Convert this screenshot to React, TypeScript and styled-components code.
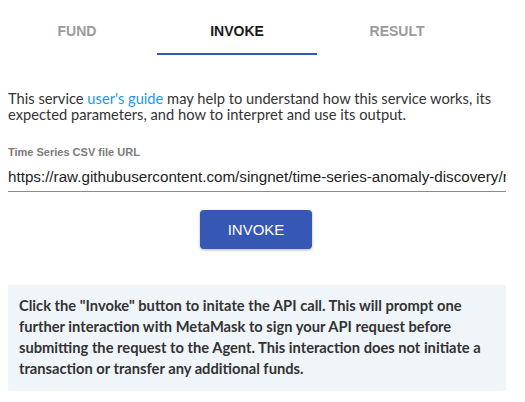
import React from "react";
import styled, { createGlobalStyle } from "styled-components";

const Global = createGlobalStyle`
  body { margin: 8px; background: #fff; font-family: "Lato", "Noto Sans", sans-serif; }
  * { box-sizing: border-box; }
`;

const Wrapper = styled.div`
  width: 498px;
  display: flex;
  flex-direction: column;
`;

const TabBar = styled.div`
  display: flex;
  margin-left: -11px;
  height: 47px;
`;

const Tab = styled.div<{ $active?: boolean }>`
  width: 160px;
  display: flex;
  align-items: center;
  justify-content: center;
  font-family: "Liberation Sans", Arial, sans-serif;
  font-weight: bold;
  font-size: 14px;
  color: ${(p) => (p.$active ? "#1a1a1a" : "#9b9b9b")};
  border-bottom: 2px solid ${(p) => (p.$active ? "#3657b3" : "transparent")};
`;

const Intro = styled.p`
  margin: 35px 0 0 0;
  font-size: 14.7px;
  line-height: 16px;
  color: #333;
`;

const Link = styled.a`
  color: #2196f3;
  text-decoration: none;
`;

const Field = styled.div`
  margin-top: 24px;
  display: flex;
  flex-direction: column;
`;

const Label = styled.label`
  font-family: "Liberation Sans", Arial, sans-serif;
  font-weight: bold;
  font-size: 11px;
  color: #7b7b7b;
  line-height: 13px;
`;

const Input = styled.div`
  margin-top: 8px;
  font-family: "Liberation Sans", Arial, sans-serif;
  font-size: 15.2px;
  color: #222;
  white-space: nowrap;
  overflow: hidden;
  padding-bottom: 5px;
  border-bottom: 1px solid #8a8a8a;
  line-height: 19px;
`;

const ButtonRow = styled.div`
  display: flex;
  justify-content: center;
  margin-top: 18px;
  padding-right: 2px;
`;

const Button = styled.button`
  width: 112px;
  height: 39px;
  background: #3657b3;
  color: #fff;
  border: none;
  border-radius: 4px;
  font-family: "Liberation Sans", Arial, sans-serif;
  font-size: 15px;
  box-shadow: 0 1px 3px rgba(0, 0, 0, 0.3);
`;

const InfoBox = styled.div`
  margin-top: 36px;
  background: #f0f5fa;
  padding: 10px 11px 12px 11px;
  font-size: 14.7px;
  font-weight: bold;
  line-height: 21px;
  color: #333;
`;

export default function App() {
  return (
    <>
      <Global />
      <Wrapper>
        <TabBar>
          <Tab>FUND</Tab>
          <Tab $active>INVOKE</Tab>
          <Tab>RESULT</Tab>
        </TabBar>
        <Intro>
          This service <Link href="#">user's guide</Link> may help to understand how this service works, its
          expected parameters, and how to interpret and use its output.
        </Intro>
        <Field>
          <Label>Time Series CSV file URL</Label>
          <Input>https://raw.githubusercontent.com/singnet/time-series-anomaly-discovery/master/</Input>
        </Field>
        <ButtonRow>
          <Button>INVOKE</Button>
        </ButtonRow>
        <InfoBox>
          Click the "Invoke" button to initate the API call. This will prompt one further interaction with
          MetaMask to sign your API request before submitting the request to the Agent. This interaction does
          not initiate a transaction or transfer any additional funds.
        </InfoBox>
      </Wrapper>
    </>
  );
}
